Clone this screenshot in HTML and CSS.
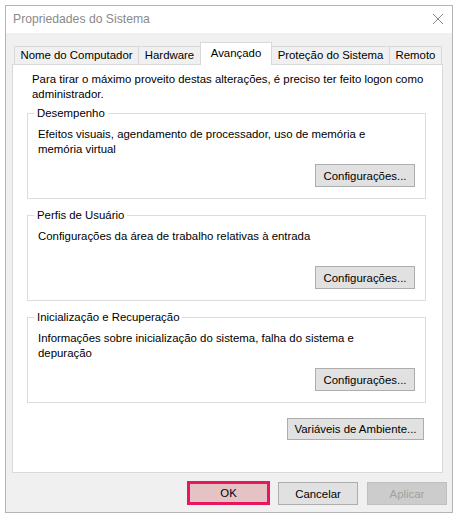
FILE: index.html
```html
<!DOCTYPE html>
<html lang="pt-BR">
<head>
<meta charset="utf-8">
<title>Propriedades do Sistema</title>
<link rel="stylesheet" href="styles.css">
</head>
<body>
<div class="window">
  <div class="titlebar">
    <span class="title">Propriedades do Sistema</span>
    <svg class="close" width="12" height="12" viewBox="0 0 12 12" aria-hidden="true">
      <path d="M1 1 L11 11 M11 1 L1 11" stroke="#8a8a8a" stroke-width="1" fill="none"/>
    </svg>
  </div>
  <div class="client">
    <div class="tabs">
      <div class="tab tab-nome">Nome do Computador</div>
      <div class="tab tab-hw">Hardware</div>
      <div class="tab tab-av active">Avançado</div>
      <div class="tab tab-prot">Proteção do Sistema</div>
      <div class="tab tab-rem">Remoto</div>
    </div>
    <div class="panel">
      <p class="intro">Para tirar o máximo proveito destas alterações, é preciso ter feito logon como<br>administrador.</p>

      <fieldset class="group">
        <legend>Desempenho</legend>
        <div class="group-body">
          <p class="desc">Efeitos visuais, agendamento de processador, uso de memória e<br>memória virtual</p>
          <button class="btn btn-config">Configurações...</button>
        </div>
      </fieldset>

      <fieldset class="group">
        <legend>Perfis de Usuário</legend>
        <div class="group-body">
          <p class="desc">Configurações da área de trabalho relativas à entrada</p>
          <button class="btn btn-config">Configurações...</button>
        </div>
      </fieldset>

      <fieldset class="group">
        <legend>Inicialização e Recuperação</legend>
        <div class="group-body">
          <p class="desc">Informações sobre inicialização do sistema, falha do sistema e<br>depuração</p>
          <button class="btn btn-config">Configurações...</button>
        </div>
      </fieldset>

      <div class="env-row">
        <button class="btn btn-env">Variáveis de Ambiente...</button>
      </div>
    </div>
    <div class="actions">
      <button class="btn btn-ok">OK</button>
      <button class="btn btn-cancel">Cancelar</button>
      <button class="btn btn-apply" disabled>Aplicar</button>
    </div>
  </div>
</div>
</body>
</html>
```

FILE: styles.css
```css
* {
  box-sizing: border-box;
}

html, body {
  margin: 0;
  padding: 0;
  background: #ffffff;
}

body {
  font-family: "Liberation Sans", Arial, sans-serif;
  font-size: 11.4px;
  color: #000000;
}

.window {
  margin: 5px 0 0 5px;
  width: 448px;
  height: 508px;
  border: 1px solid #b4b4b4;
  background: #f0f0f0;
  display: flex;
  flex-direction: column;
}

.titlebar {
  height: 27px;
  background: #ffffff;
  display: flex;
  align-items: center;
  justify-content: space-between;
  padding: 0 8px 2px 7px;
}

.title {
  font-size: 12.2px;
  color: #8a8a8a;
}

.close {
  display: block;
}

.client {
  flex: 1;
  padding: 9px 0 0 6px;
  display: flex;
  flex-direction: column;
}

.tabs {
  display: flex;
  align-items: flex-end;
  height: 23px;
  margin-right: 9px;
  padding-left: 2px;
  position: relative;
  z-index: 1;
}

.tab {
  height: 18px;
  margin-bottom: 1px;
  border: 1px solid #d9d9d9;
  border-bottom: none;
  border-left: none;
  background: #f0f0f0;
  display: flex;
  align-items: center;
  justify-content: center;
  white-space: nowrap;
  padding-bottom: 1px;
}

.tab-nome {
  width: 125px;
  border-left: 1px solid #d9d9d9;
}

.tab-hw {
  width: 62px;
}

.tab-av {
  width: 71px;
}

.tab-prot {
  width: 118px;
}

.tab-rem {
  width: 52px;
}

.tab.active {
  height: 23px;
  margin-bottom: 0;
  background: #ffffff;
  border-left: 1px solid #d9d9d9;
  margin-left: -1px;
  width: 72px;
  padding-bottom: 2px;
}

.panel {
  margin-top: -1px;
  margin-right: 9px;
  height: 409px;
  border: 1px solid #d9d9d9;
  background: #ffffff;
  padding: 7px 16px 0 14px;
}

.intro {
  margin: 0 0 4px 5px;
  line-height: 15px;
  white-space: nowrap;
}

.group {
  margin: 0 0 9px 0;
  width: 399px;
  border: 1px solid #dcdcdc;
  padding: 6px 10px 11px 10px;
  min-width: 0;
}

.group legend {
  padding: 0 3px;
  margin-left: -4px;
  line-height: 15px;
}

.group-body {
  height: 60px;
  display: flex;
  flex-direction: column;
}

.desc {
  margin: 0;
  line-height: 14.5px;
  white-space: nowrap;
}

.btn {
  font-family: "Liberation Sans", Arial, sans-serif;
  font-size: 11.4px;
  color: #000000;
  background: #e1e1e1;
  border: 1px solid #adadad;
  border-radius: 0;
  padding: 0;
  margin: 0;
  height: 23px;
  white-space: nowrap;
}

.btn-config {
  margin-top: auto;
  align-self: flex-end;
  width: 100px;
}

.env-row {
  display: flex;
  justify-content: flex-end;
  padding-right: 2px;
  margin-top: 15px;
}

.btn-env {
  width: 137px;
  height: 22px;
}

.actions {
  margin-top: 8px;
  display: flex;
  justify-content: flex-end;
  align-items: flex-end;
  padding-right: 5px;
}

.btn-ok {
  width: 83px;
  height: 24px;
  border: 3px solid #e8175d;
  background: #e5c3c5;
  margin-right: 8px;
}

.btn-cancel {
  width: 80px;
  margin-right: 9px;
}

.btn-apply {
  width: 80px;
  background: #cccccc;
  border-color: #bfbfbf;
  color: #a0a0a0;
}
```
